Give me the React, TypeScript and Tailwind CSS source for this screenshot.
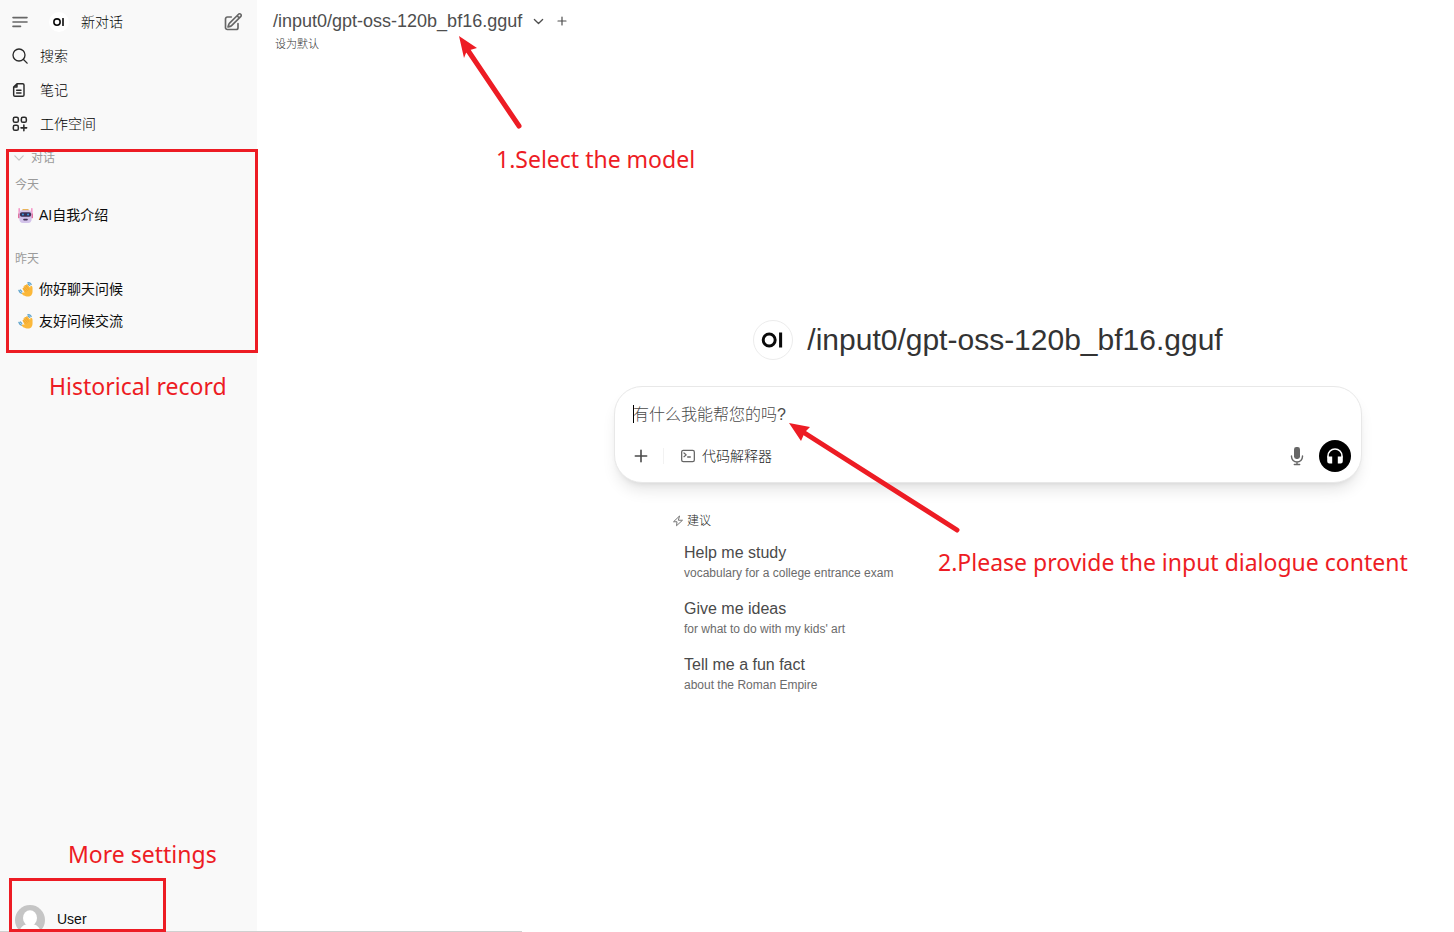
import type { ReactNode } from "react";

const MODEL = "/input0/gpt-oss-120b_bf16.gguf";

function Logo({ className }: { className: string }) {
  return (
    <svg viewBox="0 0 40 40" className={className} aria-hidden="true">
      <circle cx="16" cy="20" r="6.3" fill="none" stroke="#0a0a0a" strokeWidth="3.1" />
      <rect x="26.4" y="12.1" width="3.2" height="15.8" fill="#0a0a0a" />
    </svg>
  );
}

function Stroke({ children, className = "size-4", width = 2 }: { children: ReactNode; className?: string; width?: number }) {
  return (
    <svg
      viewBox="0 0 24 24"
      fill="none"
      stroke="currentColor"
      strokeWidth={width}
      strokeLinecap="round"
      strokeLinejoin="round"
      className={className}
      aria-hidden="true"
    >
      {children}
    </svg>
  );
}

function Robot() {
  return (
    <svg viewBox="0 0 32 32" className="size-[15px] shrink-0" aria-hidden="true">
      <rect x="1" y="0" width="3" height="13" rx="1.5" fill="#f58ac2" />
      <rect x="28" y="0" width="3" height="13" rx="1.5" fill="#f58ac2" />
      <rect x="0" y="11" width="5" height="11" rx="2.5" fill="#e0709f" />
      <rect x="27" y="11" width="5" height="11" rx="2.5" fill="#e0709f" />
      <path d="M10 2h12l2 5H8z" fill="#e9b45a" />
      <path d="M3 10c0-3 2-5 5-5h16c3 0 5 2 5 5v14c0 5-3 8-7 8H10c-4 0-7-3-7-8z" fill="#d3c3ea" />
      <rect x="4" y="9" width="24" height="9.5" rx="4" fill="#3b3054" />
      <circle cx="10.5" cy="13.8" r="2.2" fill="#3b9be0" />
      <circle cx="21.5" cy="13.8" r="2.2" fill="#3b9be0" />
      <rect x="11" y="23" width="10" height="3.4" rx="1.7" fill="#433355" />
    </svg>
  );
}

function Wave() {
  return (
    <svg viewBox="0 0 32 32" className="size-[15px] shrink-0" aria-hidden="true">
      <g fill="none" stroke="#62a5cc" strokeWidth="2.8" strokeLinecap="round">
        <path d="M2 18c1 3 3 5 6 6M5 17l3 3M21 2c3-1 5 0 7 3M22 5l3 2" />
      </g>
      <path
        d="M31 13c0-3-1-5-3-5-2 0-2 2-2 4L20 5c-2-1-3 0-3 2-2-1-4 0-3 2-2 0-3 1-2 3-2 0-3 2-2 3l4 8c-3-1-6-1-6 1 0 3 7 7 13 7 7 0 10-5 10-11z"
        fill="#fbb83a"
      />
      <path d="m17 8 6 8M14 11l6 7M12 14l5 6" fill="none" stroke="#e89a2c" strokeWidth="1.4" strokeLinecap="round" />
    </svg>
  );
}

function NavRow({ icon, children }: { icon: ReactNode; children: ReactNode }) {
  return (
    <a href="#" className="flex h-[34px] items-center gap-3 px-3 text-sm font-light text-black">
      <span className="text-[#2a2a2a]">{icon}</span>
      {children}
    </a>
  );
}

function Chat({ icon, children }: { icon: ReactNode; children: ReactNode }) {
  return (
    <li>
      <a href="#" className="flex h-8 items-center gap-1.5 pl-[18px] text-sm text-[#0d0d0d]">
        {icon}
        {children}
      </a>
    </li>
  );
}

function Sidebar() {
  return (
    <aside className="flex w-[257px] shrink-0 flex-col bg-[#f9f9f9]">
      <div className="flex h-[39px] items-center px-3 pt-1 text-[#676767]">
        <button aria-label="Toggle sidebar">
          <svg viewBox="0 0 16 16" className="size-4" fill="none" stroke="currentColor" strokeWidth="1.6" strokeLinecap="round">
            <path d="M1 3.6h14M1 8h14M1 12.4h7.5" />
          </svg>
        </button>
        <a href="#" className="ml-[21px] flex flex-1 items-center gap-3 text-sm font-light text-black">
          <Logo className="size-5 rounded-full bg-white" />
          新对话
        </a>
        <button aria-label="New chat" className="mr-0.5">
          <Stroke className="size-5" width={2}>
            <path d="m16.86 4.49 1.69-1.69a1.88 1.88 0 1 1 2.65 2.65L10.58 16.07a4.5 4.5 0 0 1-1.9 1.13L6 18l.8-2.69a4.5 4.5 0 0 1 1.13-1.9l8.93-8.92Zm0 0L19.5 7.13M18 14v4.75A2.25 2.25 0 0 1 15.75 21H5.25A2.25 2.25 0 0 1 3 18.75V8.25A2.25 2.25 0 0 1 5.25 6H10" />
          </Stroke>
        </button>
      </div>
      <nav>
        <NavRow
          icon={
            <Stroke>
              <circle cx="10.5" cy="10.5" r="9" />
              <path d="m17.2 17.2 5.5 5.5" />
            </Stroke>
          }
        >
          搜索
        </NavRow>
        <NavRow
          icon={
            <Stroke width={2.2}>
              <path d="M7.5 2.5h8.5a2 2 0 0 1 2 2v15a2 2 0 0 1-2 2H4.500a2 2 0 0 1-2-2v-12zM7.500 2.500v5H2.500M7 12.500h6.500M7 16.500h6.500" />
            </Stroke>
          }
        >
          笔记
        </NavRow>
        <NavRow
          icon={
            <Stroke width={2.3}>
              <rect x="2" y="2" width="7.5" height="7.5" rx="2.4" />
              <rect x="14" y="2" width="7.5" height="7.5" rx="2.4" />
              <rect x="2" y="14" width="7.5" height="7.5" rx="2.4" />
              <path d="M17.8 13.5v8.5M13.5 17.8h8.5" />
            </Stroke>
          }
        >
          工作空间
        </NavRow>
      </nav>
      <section className="flex-1 pt-[7px] text-xs text-[#9b9b9b]">
        <button className="flex h-5 items-center gap-[7px] pl-3.5">
          <Stroke className="size-2.5 text-[#c4c4c4]" width={2.8}>
            <path d="m2 7 10 10L22 7" />
          </Stroke>
          对话
        </button>
        <h2 className="mt-[7px] pl-[15px] leading-5">今天</h2>
        <ul className="mt-1">
          <Chat icon={<Robot />}>AI自我介绍</Chat>
        </ul>
        <h2 className="mt-[18px] pl-[15px] leading-5">昨天</h2>
        <ul className="mt-1">
          <Chat icon={<Wave />}>你好聊天问候</Chat>
          <Chat icon={<Wave />}>友好问候交流</Chat>
        </ul>
      </section>
      <button className="flex h-[27px] items-start gap-3 overflow-hidden pl-[15px] text-sm text-[#0d0d0d]">
        <svg viewBox="0 0 30 30" className="size-[30px] shrink-0 rounded-full bg-[#c5c5c5]" aria-hidden="true">
          <ellipse cx="15" cy="13" rx="7" ry="7.8" fill="#fff" />
          <path d="M4 30c0-7 4-10 8-11h6c4 1 8 4 8 11z" fill="#fff" />
        </svg>
        <span className="pt-1">User</span>
      </button>
    </aside>
  );
}

const suggestions = [
  { title: "Help me study", text: "vocabulary for a college entrance exam" },
  { title: "Give me ideas", text: "for what to do with my kids' art" },
  { title: "Tell me a fun fact", text: "about the Roman Empire" },
];

function Composer() {
  return (
    <form className="rounded-[28px] border border-[#e8e8e8] bg-white shadow-lg shadow-black/10">
      <div className="relative px-[18px] pt-3.5">
        <textarea
          aria-label="Message"
          rows={1}
          placeholder="有什么我能帮您的吗?"
          className="block h-7 w-full resize-none text-base font-light leading-7 outline-none placeholder:text-[#4a4a4a]"
        />
        <span className="absolute left-[18px] top-[18px] h-[18px] w-px bg-black" />
      </div>
      <div className="flex items-center px-2.5 pb-2.5 pt-[11px] text-[#4a4a4a]">
        <button type="button" aria-label="More" className="grid size-8 place-items-center">
          <Stroke width={2.4}>
            <path d="M12 3.5v17M3.5 12h17" />
          </Stroke>
        </button>
        <span className="mx-1.5 h-4 w-px bg-[#f2f2f2]" />
        <button type="button" className="ml-2.5 flex items-center gap-1.5 text-sm font-light text-[#222]">
          <Stroke width={1.9} className="size-4 text-[#666]">
            <rect x="2.5" y="3.5" width="19" height="17" rx="2.5" />
            <path d="m6 7.5 3.3 2.8L6 13M11.5 13.5h4" />
          </Stroke>
          代码解释器
        </button>
        <button type="button" aria-label="Voice input" className="ml-auto grid size-8 place-items-center text-[#666]">
          <svg viewBox="0 0 20 20" className="size-5" fill="none" stroke="currentColor" strokeWidth="1.4" strokeLinecap="round">
            <rect x="7" y="1" width="6" height="12" rx="2.4" fill="currentColor" stroke="none" />
            <path d="M4.5 10v.5a5.5 5.5 0 0 0 11 0V10M10 16v2.3M7.3 18.5h5.4" />
          </svg>
        </button>
        <button type="button" aria-label="Voice mode" className="ml-1.5 grid size-8 place-items-center rounded-full bg-black text-white">
          <svg viewBox="0 0 20 20" className="size-5" aria-hidden="true">
            <path d="M3 11.5V10a7 7 0 0 1 14 0v1.5" fill="none" stroke="currentColor" strokeWidth="1.6" />
            <path d="M2.2 10.5h5v7H4.4a2.2 2.2 0 0 1-2.2-2.2zM12.8 10.5h5v4.8a2.2 2.2 0 0 1-2.2 2.2h-2.8z" fill="currentColor" />
          </svg>
        </button>
      </div>
    </form>
  );
}

function Main() {
  return (
    <main className="min-w-0 flex-1">
      <header className="px-4 pt-2">
        <div className="flex items-center text-[#4e4e4e]">
          <button className="flex items-center gap-[11px] text-lg leading-[26px]">
            {MODEL}
            <Stroke className="size-[11px]" width={2.8}>
              <path d="m3 7.5 9 9 9-9" />
            </Stroke>
          </button>
          <button aria-label="Add model" className="ml-3">
            <Stroke className="size-3" width={2.4}>
              <path d="M12 4v16M4 12h16" />
            </Stroke>
          </button>
        </div>
        <button className="block pl-0.5 text-[11px] font-light leading-5 text-[#333]">设为默认</button>
      </header>
      <div className="pl-[265px] pt-[266px]">
        <div className="mx-auto max-w-[748px]">
          <h1 className="flex items-center justify-center gap-3.5 text-3xl leading-10 text-[#333]">
            <Logo className="size-10 rounded-full border border-[#ececec] bg-white" />
            {MODEL}
          </h1>
          <div className="mt-[26px]">
            <Composer />
          </div>
          <section className="pl-[58px] pt-7">
            <h2 className="flex items-center gap-[3px] text-xs font-light leading-5 text-[#222]">
              <Stroke className="size-3 text-[#777]" width={2}>
                <path d="M14.500 2.500 3 13.500h7L9 21.500 21 10.500h-7.500z" />
              </Stroke>
              建议
            </h2>
            <ul className="pl-3 pt-3">
              {suggestions.map((s) => (
                <li key={s.title} className="h-14">
                  <button className="block text-left">
                    <span className="block text-base leading-5 text-[#4a4a4a]">{s.title}</span>
                    <span className="block text-xs leading-5 text-[#6b6b6b]">{s.text}</span>
                  </button>
                </li>
              ))}
            </ul>
          </section>
        </div>
      </div>
    </main>
  );
}

function Annotations() {
  return (
    <div className="pointer-events-none absolute inset-0 overflow-hidden font-['Noto_Sans',sans-serif] text-[23px] leading-8 text-[#ed1c24]">
      <div className="absolute left-1.5 top-[149px] h-[204px] w-[252px] border-3 border-[#ed1c24]" />
      <div className="absolute bottom-0 left-[9px] h-[54px] w-[157px] border-3 border-[#ed1c24]" />
      <p className="absolute left-[49px] top-[370px]">Historical record</p>
      <p className="absolute bottom-[62px] left-[68px]">More settings</p>
      <p className="absolute left-[496px] top-[143px]">1.Select the model</p>
      <p className="absolute left-[938px] top-[546px] whitespace-nowrap">2.Please provide the input dialogue content</p>
      <svg className="absolute left-[450px] top-[30px] h-[110px] w-[80px]" viewBox="450 30 80 110" aria-hidden="true">
        <path d="M467 49 519 126" stroke="currentColor" strokeWidth="5" strokeLinecap="round" />
        <path d="m459 36 18 12-7 2-4 3-2 5z" fill="currentColor" />
      </svg>
      <svg className="absolute left-[780px] top-[415px] h-[125px] w-[190px]" viewBox="780 415 190 125" aria-hidden="true">
        <path d="m803 432 154 98" stroke="currentColor" strokeWidth="5" strokeLinecap="round" />
        <path d="m789 423 21 4-5 5-4 9z" fill="currentColor" />
      </svg>
    </div>
  );
}

export default function App() {
  return (
    <div className="relative flex min-h-screen bg-white font-['Liberation_Sans','Noto_Sans_CJK_SC',sans-serif]">
      <Sidebar />
      <Main />
      <div className="absolute bottom-0 left-0 h-px w-[522px] bg-[#d0d0d0]" />
      <Annotations />
    </div>
  );
}
